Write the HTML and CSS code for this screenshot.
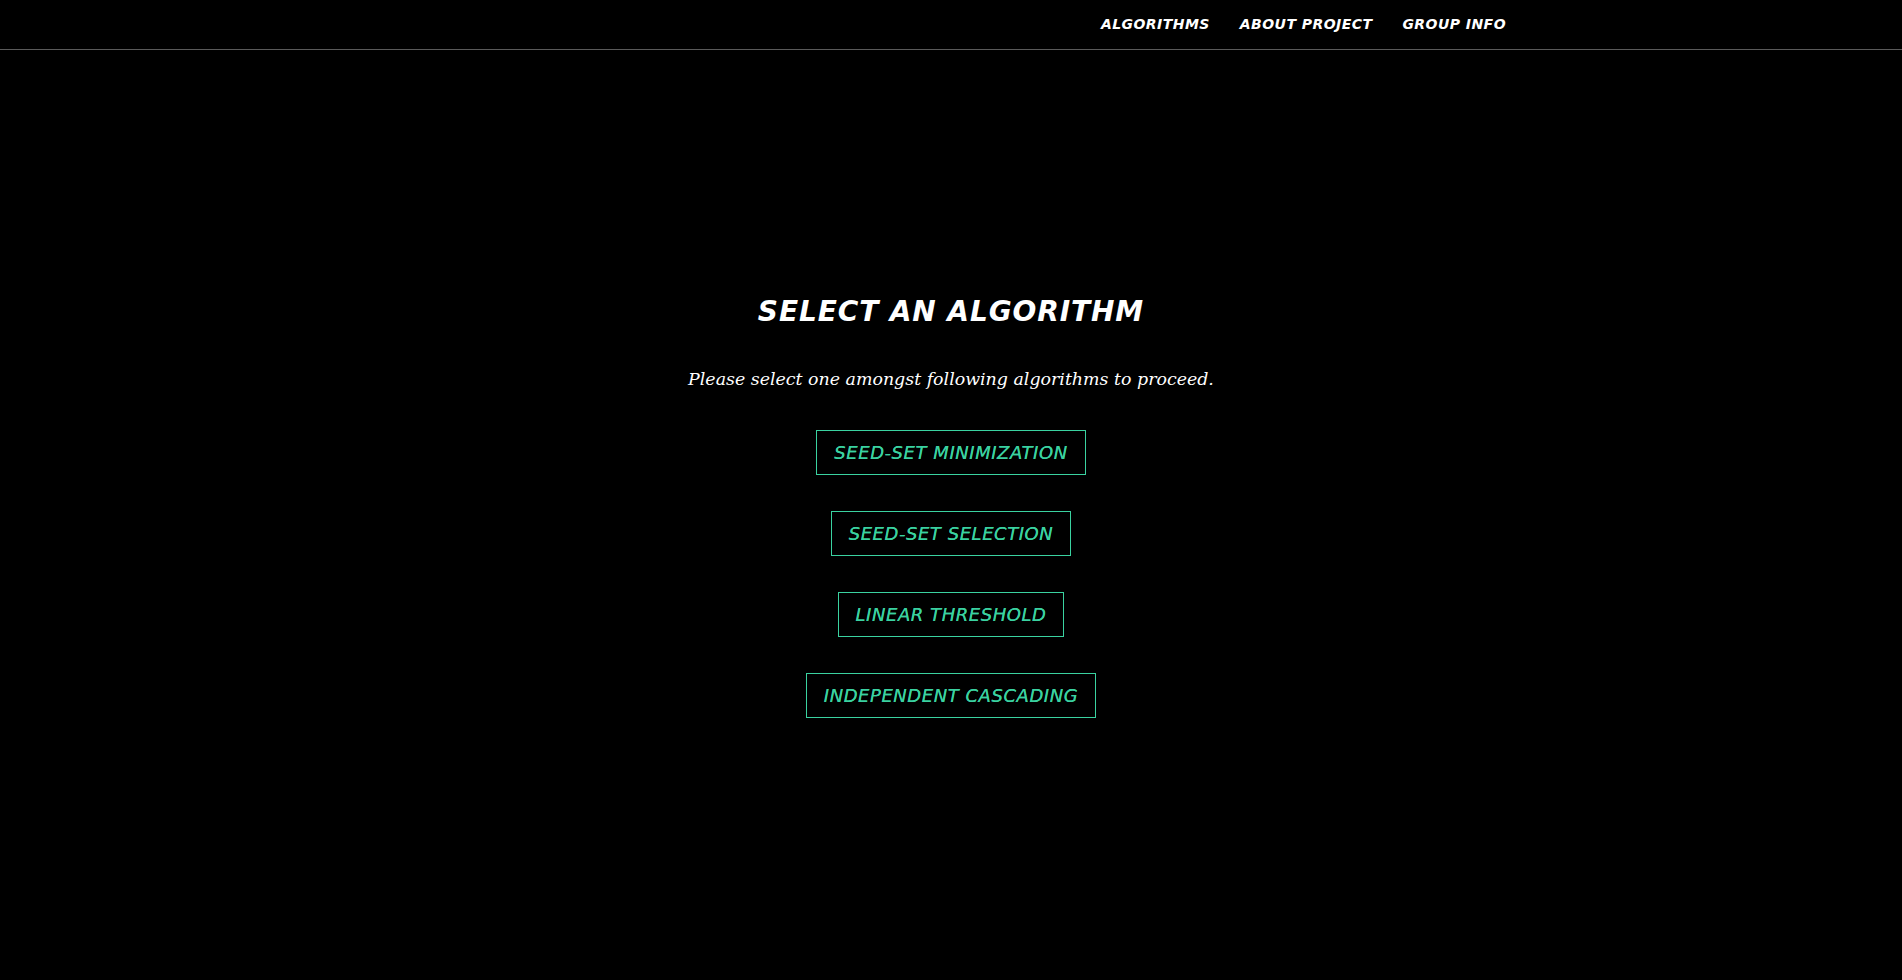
FILE: index.html
```html
<!DOCTYPE html>
<html>
<head>
<meta charset="utf-8">
<title>Select an Algorithm</title>
<link rel="stylesheet" href="styles.css">
</head>
<body>
<header class="topbar">
  <nav class="container nav">
    <a class="nav-link" href="#">ALGORITHMS</a>
    <a class="nav-link" href="#">ABOUT PROJECT</a>
    <a class="nav-link" href="#">GROUP INFO</a>
  </nav>
</header>
<main class="main">
  <h1 class="title">SELECT AN ALGORITHM</h1>
  <p class="subtitle">Please select one amongst following algorithms to proceed.</p>
  <div class="buttons">
    <a class="btn" href="#">SEED-SET MINIMIZATION</a>
    <a class="btn" href="#">SEED-SET SELECTION</a>
    <a class="btn" href="#">LINEAR THRESHOLD</a>
    <a class="btn" href="#">INDEPENDENT CASCADING</a>
  </div>
</main>
</body>
</html>
```
FILE: styles.css
```css
html, body {
  margin: 0;
  padding: 0;
  background: #000;
  color: #fff;
  height: 100%;
}
body {
  font-family: "DejaVu Sans", sans-serif;
}
.topbar {
  height: 49px;
  border-bottom: 1px solid #5a5a5a;
}
.container {
  width: 1170px;
  margin: 0 auto;
  padding: 0 15px;
  box-sizing: border-box;
}
.nav {
  display: flex;
  justify-content: flex-end;
  align-items: center;
  height: 47px;
}
.nav-link {
  color: #fff;
  text-decoration: none;
  font-style: italic;
  font-weight: 700;
  font-size: 14px;
  letter-spacing: 0.45px;
  padding: 0 15px;
}
.main {
  display: flex;
  flex-direction: column;
  align-items: center;
  padding-top: 244px;
}
.title {
  margin: 0;
  font-size: 28px;
  font-weight: 700;
  font-style: italic;
  line-height: 36px;
  letter-spacing: 0.9px;
}
.subtitle {
  margin: 35px 0 0;
  font-family: "DejaVu Serif", serif;
  font-style: italic;
  font-size: 17.4px;
  line-height: 28px;
}
.buttons {
  display: flex;
  flex-direction: column;
  align-items: center;
  gap: 36px;
  margin-top: 37px;
}
.btn {
  display: block;
  box-sizing: border-box;
  height: 45px;
  line-height: 43px;
  padding: 0 17px;
  border: 1px solid #3ad2a0;
  color: #3ad2a0;
  text-decoration: none;
  font-style: italic;
  font-size: 18px;
  letter-spacing: 0.55px;
  text-shadow: 0 0 0.4px #3ad2a0;
}
```
